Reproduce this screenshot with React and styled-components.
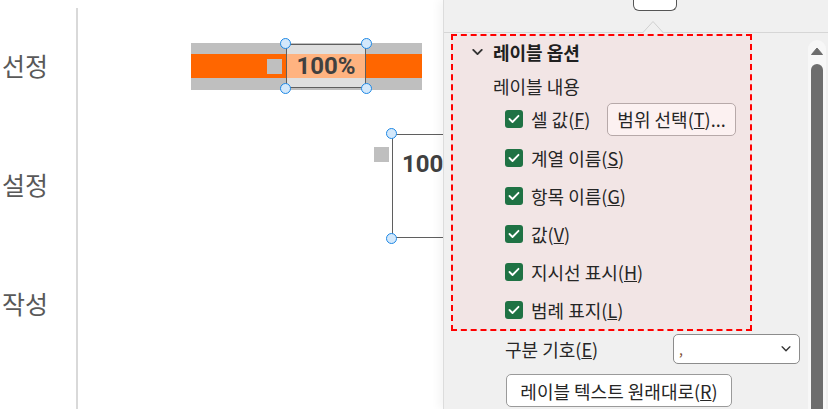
import styled, { createGlobalStyle } from "styled-components"

const GlobalStyle = createGlobalStyle`
  html, body {
    margin: 0;
    padding: 0;
    background: #fff;
  }
  body {
    font-family: "Noto Sans CJK KR", "Noto Sans", sans-serif;
  }
`

const Page = styled.div`
  display: flex;
  width: 828px;
  height: 409px;
  overflow: hidden;
  background: #fff;
`

const ChartArea = styled.div`
  display: flex;
  width: 443px;
  flex-shrink: 0;
  overflow: hidden;
`

const AxisColumn = styled.div`
  display: flex;
  flex-direction: column;
  align-items: flex-end;
  gap: 87px;
  box-sizing: border-box;
  width: 78px;
  margin-top: 8px;
  padding: 41px 28px 0 0;
  border-right: 2px solid #d9d9d9;
  flex-shrink: 0;
`

const AxisLabel = styled.div`
  height: 32px;
  line-height: 32px;
  font-size: 25px;
  color: #595959;
  white-space: nowrap;
`

const Plot = styled.div`
  position: relative;
  flex: 1;
`

const Bar = styled.div`
  position: absolute;
  left: 113px;
  top: 43px;
  width: 231px;
  box-sizing: border-box;
  padding: 11px 0 12px;
  background: #bfbfbf;
`

const BarFill = styled.div`
  height: 24px;
  background: #ff6600;
`

const Marker = styled.div`
  position: absolute;
  left: ${p => p.$x}px;
  top: ${p => p.$y}px;
  width: 15px;
  height: 15px;
  background: #bfbfbf;
`

const DataLabel = styled.div`
  position: absolute;
  left: ${p => p.$x}px;
  top: ${p => p.$y}px;
  width: ${p => p.$w}px;
  height: ${p => p.$h}px;
  box-sizing: border-box;
  border: 1.5px solid #5f5f5f;
  background: ${p => (p.$solid ? "#fff" : "rgba(255,255,255,0.5)")};
  display: flex;
  align-items: ${p => (p.$solid ? "flex-start" : "center")};
  justify-content: ${p => (p.$solid ? "flex-start" : "center")};
  padding: ${p => (p.$solid ? "15px 0 0 9px" : "0")};
  font-family: Roboto, "Noto Sans", sans-serif;
  font-weight: 700;
  font-size: 24px;
  line-height: 28px;
  color: #404040;
`

const Handle = styled.span`
  position: absolute;
  width: 9px;
  height: 9px;
  border-radius: 50%;
  border: 1.5px solid #1e88e5;
  background: #d3e8fb;
  ${p => (p.$right ? "right: -7px;" : "left: -7px;")}
  ${p => (p.$bottom ? "bottom: -7px;" : "top: -7px;")}
`

const Panel = styled.div`
  position: relative;
  display: flex;
  flex-direction: column;
  width: 385px;
  flex-shrink: 0;
  box-sizing: border-box;
  background: #f0f0f0;
  border-left: 1px solid #dcdcdc;
  box-shadow: -5px 0 8px rgba(0, 0, 0, 0.04);
`

const TopStrip = styled.div`
  position: relative;
  height: 32px;
  flex-shrink: 0;
  border-bottom: 1px solid #d6d6d6;
`

const TabStub = styled.div`
  position: absolute;
  left: 189px;
  top: 0;
  width: 44px;
  height: 11px;
  box-sizing: border-box;
  background: #fff;
  border: 1px solid #555;
  border-top: none;
  border-radius: 0 0 6px 6px;
`

const Caret = styled.svg`
  position: absolute;
  left: 199px;
  bottom: -1px;
`

const PanelBody = styled.div`
  display: flex;
  flex: 1;
  min-height: 0;
`

const Content = styled.div`
  display: flex;
  flex-direction: column;
  width: 364px;
  padding-top: 1px;
  font-size: 18px;
  color: #262626;
`

const OptionsBox = styled.div`
  display: flex;
  flex-direction: column;
  box-sizing: border-box;
  width: 301px;
  height: 297px;
  margin-left: 7px;
  border: 2px dashed #ff0000;
  background: #f2e5e5;
`

const SectionHeader = styled.div`
  display: flex;
  align-items: center;
  gap: 10px;
  height: 24px;
  margin-top: 4px;
  padding-left: 19px;
  font-weight: 700;
  color: #202020;
`

const SubTitle = styled.div`
  height: 24px;
  line-height: 24px;
  margin-top: 10px;
  padding-left: 40px;
`

const CheckRow = styled.div`
  display: flex;
  align-items: center;
  height: ${p => p.$h || 38}px;
  padding-left: 52px;
  margin-top: ${p => p.$mt || 0}px;
`

const Box = styled.span`
  display: inline-flex;
  align-items: center;
  justify-content: center;
  width: 18px;
  height: 18px;
  border-radius: 3px;
  background: #1f7244;
  flex-shrink: 0;
`

const CheckText = styled.span`
  margin-left: 8px;
  min-width: ${p => p.$minWidth || 0}px;
  white-space: nowrap;
`

const PanelButton = styled.button`
  display: inline-flex;
  align-items: center;
  justify-content: center;
  box-sizing: border-box;
  height: 33px;
  width: ${p => p.$w}px;
  padding: 0;
  border: 1px solid ${p => (p.$tint ? "#b7a9a9" : "#9a9a9a")};
  border-radius: 5px;
  background: ${p => (p.$tint ? "#fcf1f1" : "#fff")};
  font-family: inherit;
  font-size: 18px;
  color: #262626;
  white-space: nowrap;
`

const FieldRow = styled.div`
  display: flex;
  align-items: center;
  height: 30px;
  margin-top: 3px;
  padding-left: 61px;
`

const FieldLabel = styled.span`
  width: 168px;
  white-space: nowrap;
`

const Select = styled.div`
  display: flex;
  align-items: center;
  justify-content: space-between;
  box-sizing: border-box;
  width: 127px;
  height: 30px;
  padding: 0 8px 0 5px;
  background: #fff;
  border: 1px solid #8c8c8c;
  border-radius: 5px;
  font-size: 14px;
  color: #7a4a2a;
`

const ResetRow = styled.div`
  margin-top: 10px;
  padding-left: 62px;
`

const ScrollTrack = styled.div`
  display: flex;
  flex-direction: column;
  align-items: center;
  gap: 9px;
  width: 18px;
  margin-top: 7px;
  padding-top: 7px;
  box-sizing: border-box;
  border-radius: 9px 9px 0 0;
  background: #f7f7f7;
`

const ScrollThumb = styled.div`
  flex: 1;
  width: 12px;
  border-radius: 6px 6px 0 0;
  background: #6d6d6d;
`

const Chevron = ({ size = 11, stroke = "#333", width = 2 }) => (
  <svg width={size} height={size * 0.6} viewBox="0 0 11 7">
    <polyline points="1,1 5.5,5.5 10,1" fill="none" stroke={stroke} strokeWidth={width} strokeLinecap="round" strokeLinejoin="round" />
  </svg>
)

const Check = ({ label, children, minWidth, h, mt }) => (
  <CheckRow $h={h} $mt={mt}>
    <Box>
      <svg width="12" height="10" viewBox="0 0 12 10">
        <polyline points="1.5,5 4.5,8 10.5,1.8" fill="none" stroke="#fff" strokeWidth="1.8" strokeLinecap="round" strokeLinejoin="round" />
      </svg>
    </Box>
    <CheckText $minWidth={minWidth}>{label}</CheckText>
    {children}
  </CheckRow>
)

const Key = ({ k }) => (
  <>
    (<u>{k}</u>)
  </>
)

export default function App() {
  return (
    <>
      <GlobalStyle />
      <Page>
        <ChartArea>
          <AxisColumn>
            <AxisLabel>선정</AxisLabel>
            <AxisLabel>설정</AxisLabel>
            <AxisLabel>작성</AxisLabel>
          </AxisColumn>
          <Plot>
            <Bar>
              <BarFill />
            </Bar>
            <Marker $x={189} $y={59} />
            <DataLabel $x={208} $y={44} $w={80} $h={44}>
              100%
              <Handle />
              <Handle $right />
              <Handle $bottom />
              <Handle $right $bottom />
            </DataLabel>
            <Marker $x={296} $y={147} />
            <DataLabel $solid $x={314} $y={134} $w={200} $h={104}>
              100%
              <Handle />
              <Handle $bottom />
            </DataLabel>
          </Plot>
        </ChartArea>

        <Panel>
          <TopStrip>
            <TabStub />
            <Caret width="20" height="13" viewBox="0 0 20 13">
              <polygon points="0,13 10,1.5 20,13" fill="#f0f0f0" />
              <polyline points="0,12.5 10,1.5 20,12.5" fill="none" stroke="#d0d0d0" strokeWidth="1" />
            </Caret>
          </TopStrip>
          <PanelBody>
            <Content>
              <OptionsBox>
                <SectionHeader>
                  <Chevron />
                  레이블 옵션
                </SectionHeader>
                <SubTitle>레이블 내용</SubTitle>
                <Check label={<>셀 값<Key k="F" /></>} minWidth={76} h={40} mt={1}>
                  <PanelButton $tint $w={129}>
                    범위 선택<Key k="T" />...
                  </PanelButton>
                </Check>
                <Check label={<>계열 이름<Key k="S" /></>} />
                <Check label={<>항목 이름<Key k="G" /></>} />
                <Check label={<>값<Key k="V" /></>} />
                <Check label={<>지시선 표시<Key k="H" /></>} />
                <Check label={<>범례 표지<Key k="L" /></>} />
              </OptionsBox>
              <FieldRow>
                <FieldLabel>
                  구분 기호<Key k="E" />
                </FieldLabel>
                <Select>
                  <span>,</span>
                  <Chevron size={10} stroke="#333" width={1.6} />
                </Select>
              </FieldRow>
              <ResetRow>
                <PanelButton $w={226}>
                  레이블 텍스트 원래대로<Key k="R" />
                </PanelButton>
              </ResetRow>
            </Content>
            <ScrollTrack>
              <svg width="12" height="8" viewBox="0 0 12 8">
                <polygon points="0.5,7.5 6,1 11.5,7.5" fill="#6d6d6d" stroke="#6d6d6d" strokeLinejoin="round" />
              </svg>
              <ScrollThumb />
            </ScrollTrack>
          </PanelBody>
        </Panel>
      </Page>
    </>
  )
}
